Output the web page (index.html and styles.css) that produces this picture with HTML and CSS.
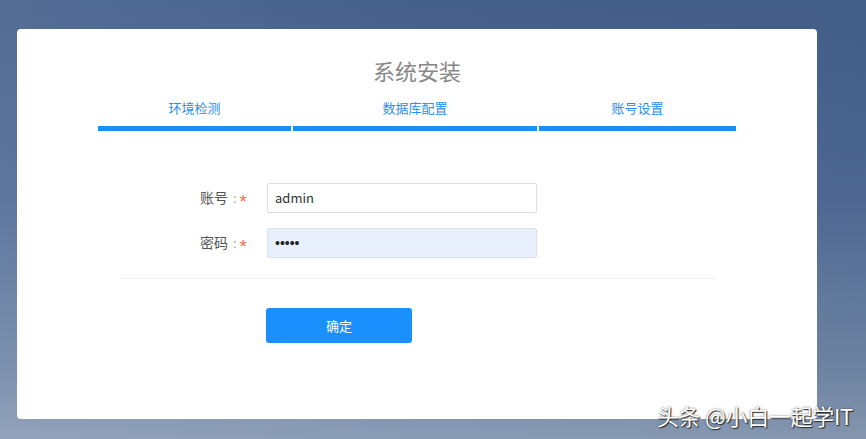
FILE: index.html
```html
<!DOCTYPE html>
<html lang="zh">
<head>
<meta charset="utf-8">
<title>系统安装</title>
<link rel="stylesheet" href="styles.css">
</head>
<body>
<div class="page">
  <div class="card">
    <h1 class="title">系统安装</h1>
    <div class="steps">
      <div class="step"><span class="step-label">环境检测</span><span class="step-bar"></span></div>
      <div class="step"><span class="step-label">数据库配置</span><span class="step-bar"></span></div>
      <div class="step"><span class="step-label">账号设置</span><span class="step-bar"></span></div>
    </div>
    <form class="form">
      <div class="row">
        <label class="label">账号<span class="colon">:</span><span class="req">*</span></label>
        <div class="input">admin</div>
      </div>
      <div class="row">
        <label class="label">密码<span class="colon">:</span><span class="req">*</span></label>
        <div class="input autofill">•••••</div>
      </div>
    </form>
    <div class="divider"></div>
    <div class="actions">
      <button type="button" class="btn">确定</button>
    </div>
  </div>
  <div class="watermark">头条 @小白一起学IT</div>
</div>
</body>
</html>
```

FILE: styles.css
```css
html, body {
  margin: 0;
  padding: 0;
  width: 866px;
  height: 439px;
  overflow: hidden;
}
body {
  font-family: "Noto Sans CJK SC", "Noto Sans", sans-serif;
  background:
    linear-gradient(to right, rgba(255,255,255,0.08) 0%, rgba(255,255,255,0) 50%, rgba(0,0,0,0.04) 100%),
    linear-gradient(to bottom, #44608b 0%, #506b96 45%, #7289a9 85%, #8a9cb5 100%);
}
.page {
  position: relative;
  width: 866px;
  height: 439px;
  padding: 29px 0 0 17px;
  box-sizing: border-box;
}
.card {
  width: 800px;
  height: 390px;
  background: #fff;
  border-radius: 4px;
  box-sizing: border-box;
  padding-top: 25px;
}
.title {
  margin: 0;
  text-align: center;
  font-size: 22px;
  line-height: 32px;
  font-weight: 400;
  color: #888;
}
.steps {
  display: grid;
  grid-template-columns: 193px 244px 197px;
  column-gap: 2px;
  width: 638px;
  margin: 12px auto 0;
}
.step {
  display: flex;
  flex-direction: column;
  align-items: center;
}
.step-label {
  font-size: 13px;
  line-height: 20px;
  color: #2a8ff0;
}
.step-bar {
  display: block;
  align-self: stretch;
  height: 5px;
  margin-top: 8px;
  background: #1c8ef9;
}
.form {
  margin: 52px 0 0;
  display: flex;
  flex-direction: column;
  gap: 15px;
}
.row {
  display: flex;
  align-items: center;
  height: 30px;
}
.label {
  width: 250px;
  text-align: right;
  font-size: 14px;
  line-height: 20px;
  color: #555;
  padding-right: 20px;
  box-sizing: border-box;
}
.colon {
  color: #aaa;
  margin: 0 3px 0 5px;
  font-size: 13px;
}
.req {
  display: inline-block;
  color: #ef6f4c;
  font-family: "Liberation Sans", sans-serif;
  font-size: 19px;
  line-height: 14px;
  vertical-align: -5px;
}
.input {
  width: 270px;
  height: 30px;
  box-sizing: border-box;
  border: 1px solid #dcdfe6;
  border-radius: 2px;
  padding: 0 7px;
  font-size: 13px;
  line-height: 28px;
  color: #333;
  background: #fff;
}
.input.autofill {
  background: #e8f0fe;
  font-family: "Liberation Sans", sans-serif;
  font-size: 14px;
  letter-spacing: 0;
  color: #222;
}
.divider {
  height: 1px;
  background: #efefef;
  margin: 20px 103px 0;
}
.actions {
  padding-left: 249px;
  margin-top: 29px;
}
.btn {
  width: 146px;
  height: 35px;
  border: 0;
  border-radius: 3px;
  background: #1a8ffe;
  color: #fff;
  font-family: "Noto Sans CJK SC", sans-serif;
  font-size: 13px;
  padding: 0;
}
.watermark {
  position: absolute;
  right: 13px;
  bottom: 9px;
  font-size: 22px;
  line-height: 30px;
  color: #fff;
  text-shadow: 1px 1px 1px #2a2a2a, 0 0 2px rgba(0,0,0,0.6);
  font-family: "Noto Sans CJK SC", sans-serif;
  letter-spacing: -0.3px;
}
```
